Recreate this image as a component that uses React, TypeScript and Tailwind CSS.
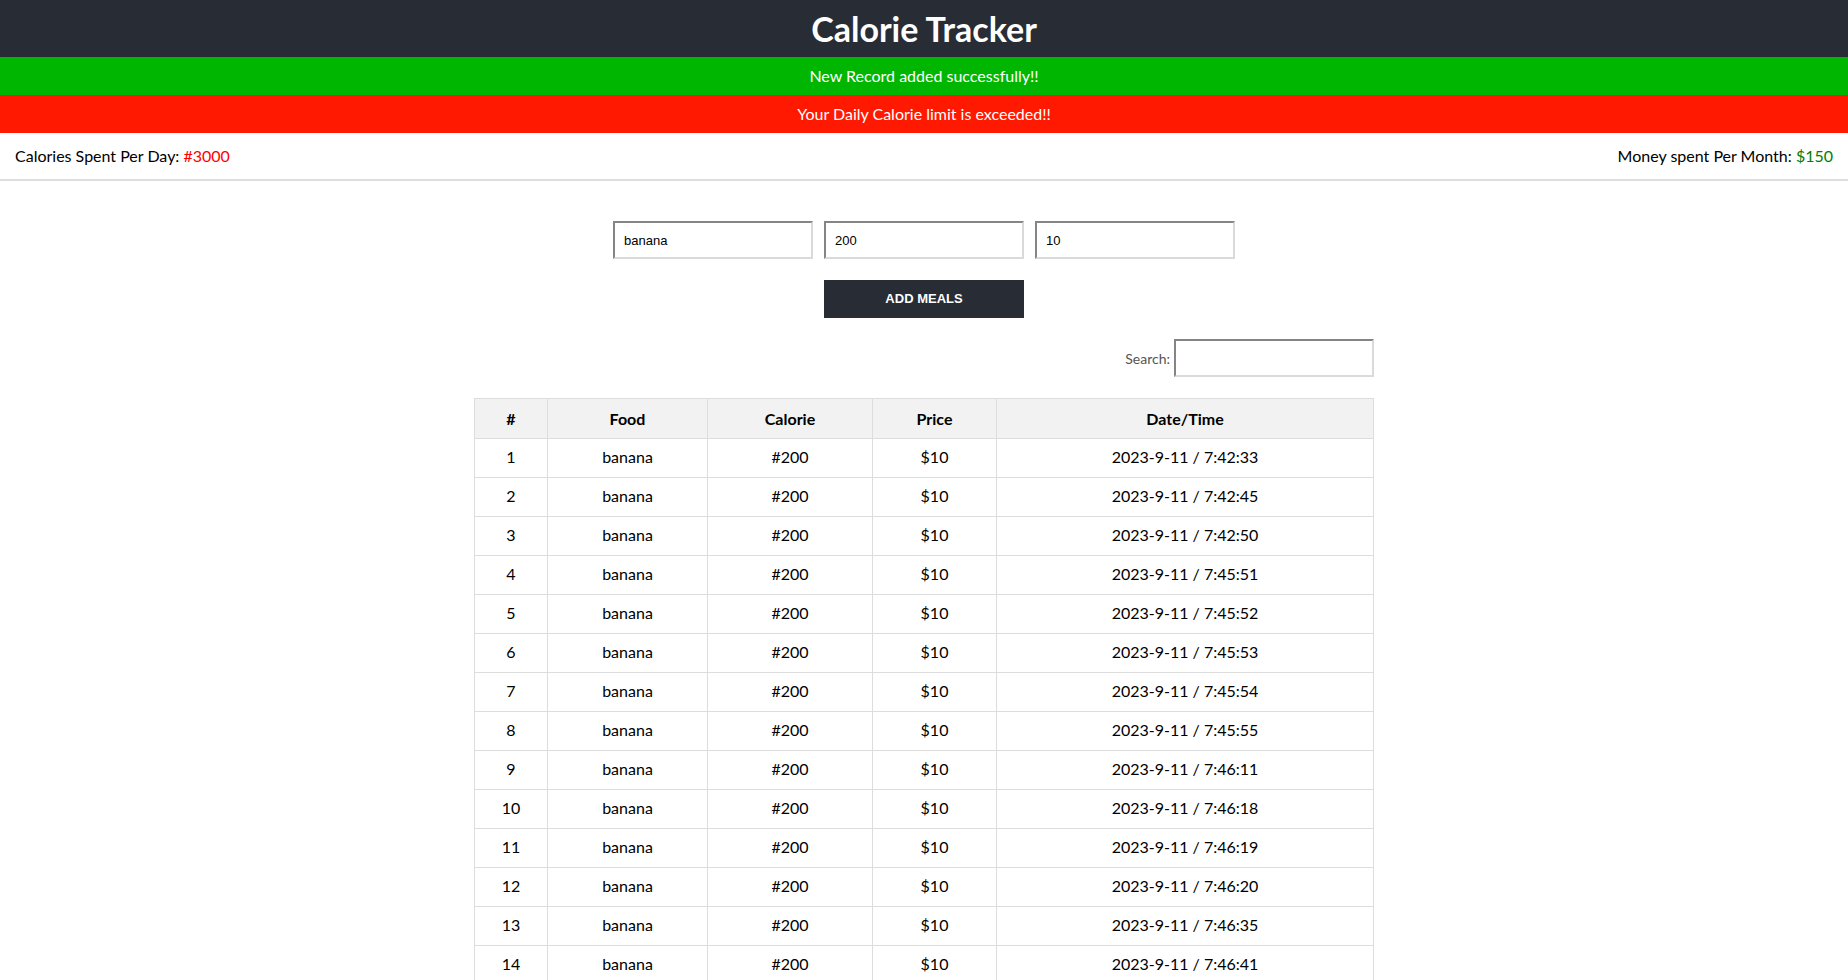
import React from "react";

const times = [
  "7:42:33", "7:42:45", "7:42:50", "7:45:51", "7:45:52", "7:45:53", "7:45:54",
  "7:45:55", "7:46:11", "7:46:18", "7:46:19", "7:46:20", "7:46:35", "7:46:41", "7:46:45",
];

export default function App() {
  return (
    <div className="min-h-screen bg-white text-black" style={{ fontFamily: "Lato, 'Noto Sans', sans-serif" }}>
      <header className="h-[57px] bg-[#282c34] flex items-center justify-center">
        <h1 className="text-[34px] font-bold text-white leading-none">Calorie Tracker</h1>
      </header>
      <div className="h-[38px] bg-[#00b600] text-white text-[16px] flex items-center justify-center">
        New Record added successfully!!
      </div>
      <div className="h-[38px] bg-[#ff1900] text-white text-[16px] flex items-center justify-center">
        Your Daily Calorie limit is exceeded!!
      </div>
      <div className="h-[48px] border-b-2 border-[#dedede] flex items-center justify-between px-[15px] text-[16px]">
        <div>
          Calories Spent Per Day: <span className="text-[#ff0000]">#3000</span>
        </div>
        <div>
          Money spent Per Month: <span className="text-[#008000]">$150</span>
        </div>
      </div>

      <div className="flex flex-col items-center pt-[40px]">
        <div className="flex gap-[11px]" style={{ fontFamily: "'Liberation Sans', Arial, sans-serif" }}>
          {["banana", "200", "10"].map((v) => (
            <input
              key={v}
              defaultValue={v}
              className="w-[200px] h-[38px] px-[9px] text-[13px] text-black border-2 border-t-[#858585] border-l-[#858585] border-r-[#dadada] border-b-[#dadada] outline-none"
            />
          ))}
        </div>
        <button
          className="mt-[21px] w-[200px] h-[38px] bg-[#282c34] text-white text-[13px] font-bold uppercase"
          style={{ fontFamily: "'Liberation Sans', Arial, sans-serif" }}
        >
          Add Meals
        </button>

        <div className="w-[900px] mt-[21px] flex justify-end items-center gap-[4px]">
          <label className="text-[14px] text-[#555]">Search:</label>
          <input className="w-[200px] h-[38px] border-2 border-t-[#858585] border-l-[#858585] border-r-[#dadada] border-b-[#dadada] outline-none" />
        </div>

        <table className="mt-[21px] w-[900px] border-collapse text-[16px] text-center">
          <thead>
            <tr className="bg-[#f2f2f2]">
              <th className="w-[73px] h-[40px] border border-[#dddddd] font-bold">#</th>
              <th className="w-[160px] border border-[#dddddd] font-bold">Food</th>
              <th className="w-[165px] border border-[#dddddd] font-bold">Calorie</th>
              <th className="w-[124px] border border-[#dddddd] font-bold">Price</th>
              <th className="border border-[#dddddd] font-bold">Date/Time</th>
            </tr>
          </thead>
          <tbody>
            {times.map((t, i) => (
              <tr key={i}>
                <td className="h-[39px] pb-[2px] border border-[#dddddd]">{i + 1}</td>
                <td className="pb-[2px] border border-[#dddddd]">banana</td>
                <td className="pb-[2px] border border-[#dddddd]">#200</td>
                <td className="pb-[2px] border border-[#dddddd]">$10</td>
                <td className="pb-[2px] border border-[#dddddd]">2023-9-11 / {t}</td>
              </tr>
            ))}
          </tbody>
        </table>
      </div>
    </div>
  );
}
